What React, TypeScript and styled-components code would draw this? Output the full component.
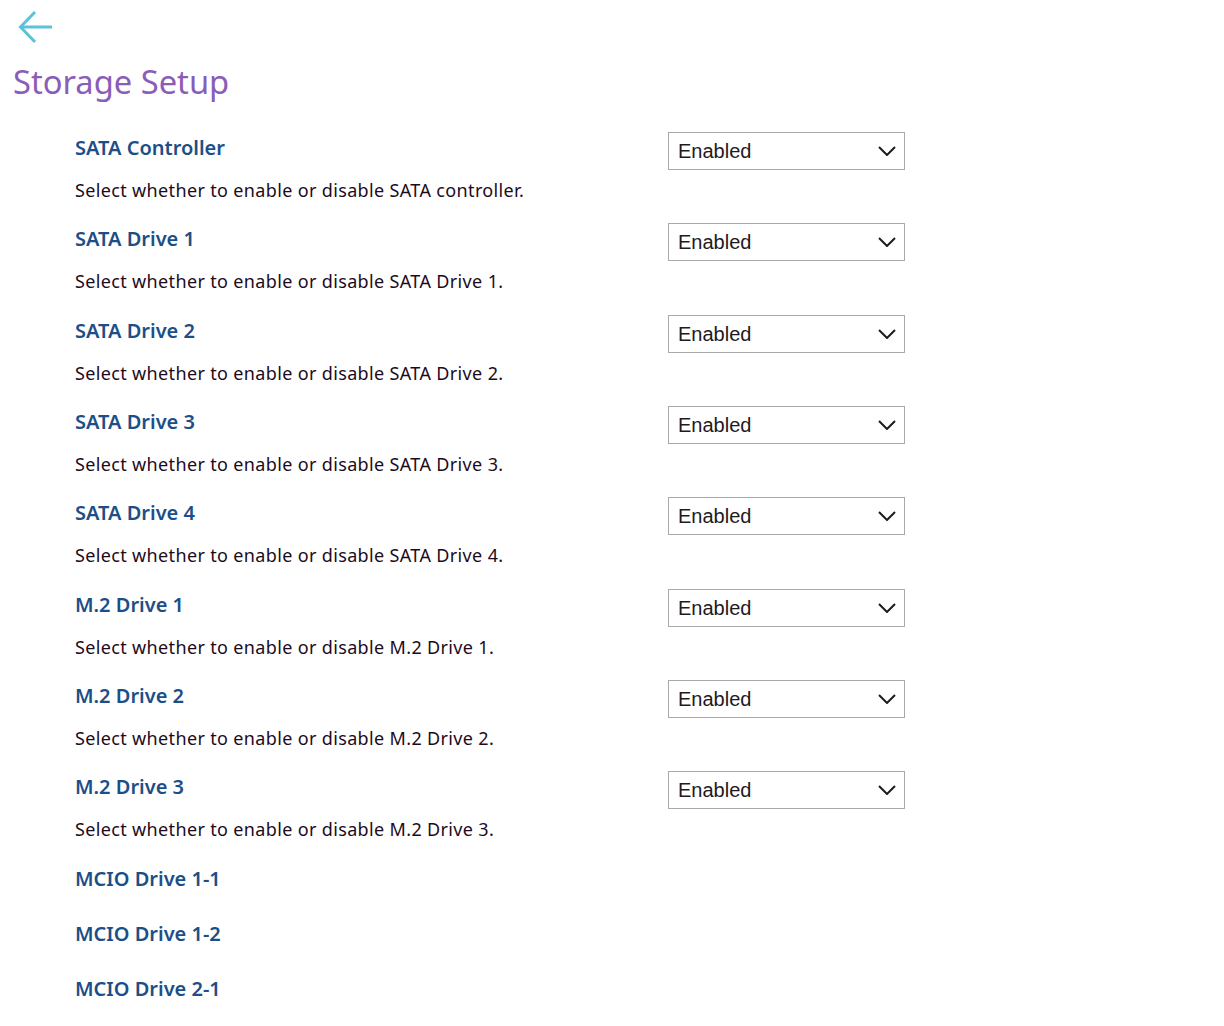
import React from 'react';
import styled, { createGlobalStyle } from 'styled-components';

const GlobalStyle = createGlobalStyle`
  body {
    margin: 0;
    background: #fff;
    font-family: "Noto Sans", Lato, sans-serif;
  }
`;

const Page = styled.div`
  padding: 10px 0 0 13px;
`;

const BackButton = styled.button`
  display: block;
  border: 0;
  background: none;
  padding: 0;
  margin-left: 5px;
  width: 36px;
  height: 34px;
  cursor: pointer;
`;

const Title = styled.h1`
  margin: 16px 0 0;
  font-size: 32.7px;
  font-weight: 400;
  line-height: 44px;
  color: #8a5db9;
`;

const Settings = styled.div`
  margin-top: 28px;
  padding-left: 62px;
`;

const Row = styled.div<{ $short?: boolean }>`
  display: grid;
  grid-template-columns: 593px 237px;
  grid-template-areas:
    'label select'
    'desc desc';
  align-content: start;
  height: ${p => (p.$short ? '55px' : '91.33px')};
`;

const Label = styled.div`
  grid-area: label;
  font-size: 20px;
  font-weight: 600;
  line-height: 32px;
  color: #1c4f87;
`;

const Desc = styled.div`
  grid-area: desc;
  margin-top: 8px;
  font-size: 18px;
  letter-spacing: 0.35px;
  line-height: 24px;
  color: #1d0b1d;
`;

const SelectWrap = styled.div`
  grid-area: select;
  position: relative;
  height: 38px;
`;

const Select = styled.select`
  appearance: none;
  width: 100%;
  height: 38px;
  padding: 0 0 0 9px;
  border: 1px solid #a9a9a9;
  border-radius: 0;
  background: #fff;
  font-family: "Liberation Sans", Arial, sans-serif;
  font-size: 20px;
  color: #1e1a1e;
`;

const Chevron = styled.svg`
  position: absolute;
  right: 9px;
  top: 14px;
  pointer-events: none;
`;

const items = [
  { label: 'SATA Controller', desc: 'Select whether to enable or disable SATA controller.' },
  { label: 'SATA Drive 1', desc: 'Select whether to enable or disable SATA Drive 1.' },
  { label: 'SATA Drive 2', desc: 'Select whether to enable or disable SATA Drive 2.' },
  { label: 'SATA Drive 3', desc: 'Select whether to enable or disable SATA Drive 3.' },
  { label: 'SATA Drive 4', desc: 'Select whether to enable or disable SATA Drive 4.' },
  { label: 'M.2 Drive 1', desc: 'Select whether to enable or disable M.2 Drive 1.' },
  { label: 'M.2 Drive 2', desc: 'Select whether to enable or disable M.2 Drive 2.' },
  { label: 'M.2 Drive 3', desc: 'Select whether to enable or disable M.2 Drive 3.' },
];

const groups = ['MCIO Drive 1-1', 'MCIO Drive 1-2', 'MCIO Drive 2-1'];

export default function App() {
  return (
    <>
      <GlobalStyle />
      <Page>
        <BackButton aria-label="Back">
          <svg width="36" height="34" viewBox="0 0 36 34" fill="none">
            <path d="M34 17H3M17 2L2.5 17L17 32" stroke="#5bc2dc" strokeWidth="3" />
          </svg>
        </BackButton>
        <Title>Storage Setup</Title>
        <Settings>
          {items.map(item => (
            <Row key={item.label}>
              <Label>{item.label}</Label>
              <SelectWrap>
                <Select defaultValue="Enabled">
                  <option>Enabled</option>
                  <option>Disabled</option>
                </Select>
                <Chevron width="18" height="10" viewBox="0 0 18 10" fill="none">
                  <path d="M1 1L9 9L17 1" stroke="#1e1a1e" strokeWidth="2" />
                </Chevron>
              </SelectWrap>
              <Desc>{item.desc}</Desc>
            </Row>
          ))}
          {groups.map(g => (
            <Row key={g} $short>
              <Label>{g}</Label>
            </Row>
          ))}
        </Settings>
      </Page>
    </>
  );
}
